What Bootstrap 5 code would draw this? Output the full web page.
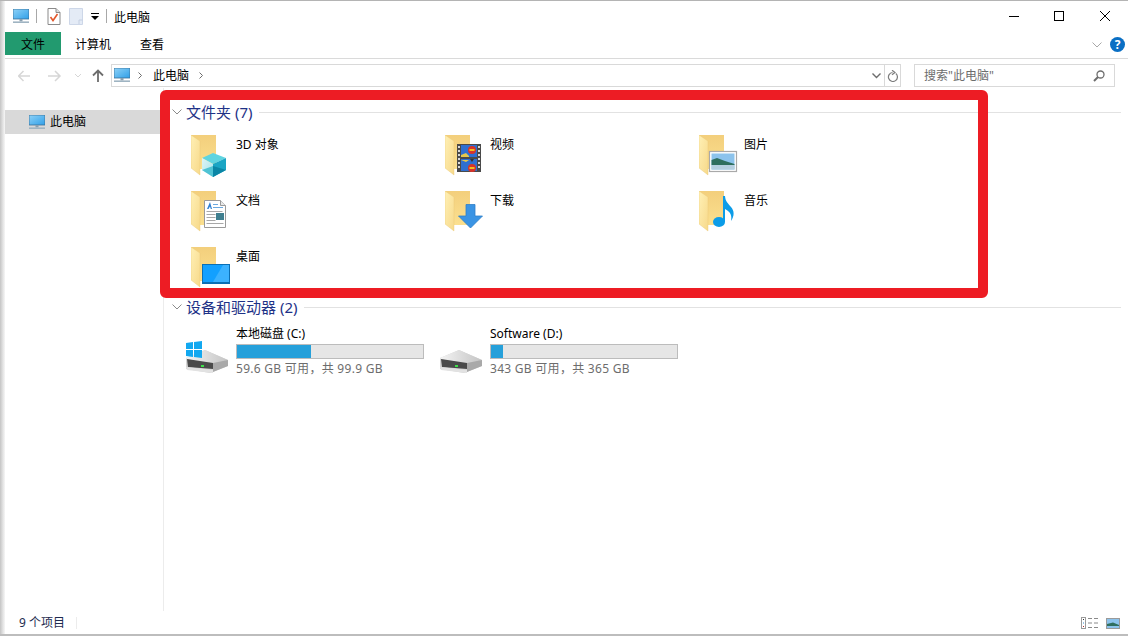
<!DOCTYPE html>
<html lang="zh-CN">
<head>
    <meta charset="UTF-8">
    <meta name="viewport" content="width=device-width, initial-scale=1.0">
    <title>此电脑</title>
    <link href="https://cdn.jsdelivr.net/npm/bootstrap@5.3.0/dist/css/bootstrap.min.css" rel="stylesheet">
    <style>
        html, body { height: 636px; overflow: hidden; }
        body {
            background: #fff;
            color: #000;
            font-family: "Noto Sans", "Noto Sans CJK SC", sans-serif;
            font-size: 12px;
            line-height: 16px;
        }
        .win {
            position: relative;
            width: 1128px;
            height: 636px;
            padding-left: 5px;
            border-top: 1px solid #b4b4b4;
            border-bottom: 2px solid #bdbdbd;
            background: linear-gradient(to right, #c4c4c4 0, #e4e4e4 3px, #f6f6f6 5px, #fff 5px);
        }
        .title-bar { height: 30px; padding-left: 8px; }
        .title-bar svg { flex: none; }
        .sep { width: 1px; height: 14px; background: #a8a8a8; flex: none; }
        .tb-pc { margin-right: 7px; }
        .tb-doc { margin-left: 10px; }
        .tb-gap8 { margin-left: 8px; }
        .tb-gap7 { margin-left: 7px; }
        .tb-name { margin-left: 7px; margin-top: 4px; }
        .win-btns { margin-left: auto; padding-right: 18px; gap: 35px; }
        .btn-close-x { margin-left: 1px; }
        .tab-bar { height: 28px; border-bottom: 1px solid #dadada; padding-right: 3px; }
        .file-tab { width: 56px; height: 23px; background: #229a6f; margin-top: 1px; padding-top: 2px; }
        .rib-tab { margin-top: 6px; }
        .rib-one { margin-left: 14px; }
        .rib-two { margin-left: 29px; }
        .rib-right { margin-top: 6px; }
        .nav-row { height: 29px; padding-left: 13px; padding-top: 5px; }
        .addr-box {
            width: 790px;
            height: 23px;
            border: 1px solid #d9d9d9;
            margin-left: 7px;
            padding-left: 2px;
        }
        .addr-name { margin-left: 11px; }
        .addr-chev { margin-left: 10px; }
        .addr-refresh { width: 16px; height: 21px; border-left: 1px solid #d9d9d9; margin-left: 3px; }
        .search-box {
            width: 201px;
            height: 23px;
            border: 1px solid #d9d9d9;
            margin-left: 13px;
            padding: 0 5px 0 9px;
            color: #6d6d6d;
        }
        .body-row { height: 523px; }
        .side-pane { width: 159px; flex: none; padding-top: 22px; border-right: 1px solid #ececec; }
        .side-item { width: 155px; height: 24px; background: #d9d9d9; padding-left: 24px; gap: 5px; }
        .main-pane { position: relative; flex: 1; padding: 14px 7px 0 8px; }
        .grp-head { height: 20px; color: #1e3287; font-size: 15px; gap: 4px; }
        .grp-line { flex: 1; height: 1px; background: #e2e2e2; margin-left: 3px; }
        .folder-grid {
            display: grid;
            grid-template-columns: repeat(3, 254px);
            grid-auto-rows: 56px;
            padding: 13px 0 0 19px;
            margin-bottom: -6px;
        }
        .folder-item svg { flex: none; }
        .folder-item span { margin-top: 2px; }
        .drive-row { padding: 9px 0 0 14px; }
        .drive-item { width: 254px; }
        .drive-item svg { flex: none; margin-top: 15px; }
        .drive-info { width: 188px; margin-left: 8px; }
        .drive-bar { height: 15px; background: #e6e6e6; border: 1px solid #bcbcbc; margin: 2px 0; }
        .drive-used { height: 100%; background: #26a0da; }
        .drive-sub { color: #6d6d6d; letter-spacing: .28px; }
        .status-bar { height: 24px; padding-left: 14px; padding-right: 8px; color: #1e2b4f; }
        .status-sep { width: 1px; height: 12px; background: #ececec; margin-left: 11px; }
        .red-box {
            position: absolute;
            left: 160px;
            top: 89px;
            width: 828px;
            height: 208px;
            border: 10px solid #ed1c24;
            border-radius: 6px;
        }
    </style>
</head>
<body>
    <svg width="0" height="0" class="position-absolute">
        <defs>
            <linearGradient id="gScreen" x1="0" y1="0" x2="1" y2="1">
                <stop offset="0" stop-color="#8fd2f7"/><stop offset="1" stop-color="#2f9fe8"/>
            </linearGradient>
            <linearGradient id="gBack" x1="0" y1="0" x2="0" y2="1">
                <stop offset="0" stop-color="#f3cf7c"/><stop offset="1" stop-color="#fbe08f"/>
            </linearGradient>
            <linearGradient id="gFold" x1="0" y1="0" x2="1" y2="1">
                <stop offset="0" stop-color="#fff0b5"/><stop offset="1" stop-color="#f7d98a"/>
            </linearGradient>
            <linearGradient id="gTop" x1="0" y1="0" x2="1" y2="0">
                <stop offset="0" stop-color="#f4f4f4"/><stop offset="1" stop-color="#c4c4c4"/>
            </linearGradient>
            <linearGradient id="gCubeL" x1="0" y1="0" x2="1" y2="1">
                <stop offset="0" stop-color="#dff5f7"/><stop offset="1" stop-color="#a5e2ea"/>
            </linearGradient>
            <symbol id="pc" viewBox="0 0 16 15">
                <rect x="0" y="0" width="16" height="10" fill="url(#gScreen)" stroke="#3a6f96" stroke-width=".8"/>
                <rect x="6.5" y="10" width="3" height="2.4" fill="#8aa0b0"/>
                <rect x="0" y="12.4" width="16" height="1.6" fill="#9fb4c2"/>
            </symbol>
            <symbol id="folder" viewBox="0 0 45 45">
                <path d="M0 0H25V34H8Z" fill="url(#gBack)"/>
                <path d="M0 0L9 6V40L0 33Z" fill="url(#gFold)" stroke="#e9c877" stroke-width=".4"/>
            </symbol>
            <symbol id="drive" viewBox="0 0 42 32">
                <path d="M0 17L19 9L42 19V25L24 32L0 28Z" fill="#d4d4d4"/>
                <path d="M0 17L19 9L42 19L27 24L1 18Z" fill="url(#gTop)"/>
                <path d="M1 18L27 22V28L2 26Z" fill="#4a4a4a"/>
                <path d="M27 22L42 19V25L27 31Z" fill="#a9a9a9"/>
                <path d="M0 26L27 29V32L1 29Z" fill="#e2e2e2"/>
                <rect x="15" y="24" width="3" height="2" fill="#3ee04a"/>
            </symbol>
        </defs>
    </svg>

    <div class="win">
        <div class="title-bar d-flex align-items-center">
            <svg width="16" height="15" class="tb-pc"><use href="#pc"/></svg>
            <span class="sep"></span>
            <svg width="14" height="17" class="tb-doc">
                <path d="M1 .5H9L13 4.500V16.500H1Z" fill="#fff" stroke="#8a8a8a"/>
                <path d="M9 .5V4.500H13" fill="#ddd" stroke="#8a8a8a"/>
                <path d="M3.500 9L6 12.500L10.500 6" fill="none" stroke="#e2572b" stroke-width="1.600"/>
            </svg>
            <svg width="14" height="17" class="tb-gap8">
                <path d="M.5 .5H13.500V16.500H.5Z" fill="#e4ebf6" stroke="#cdd7e8"/>
                <path d="M10 16V12H13.500" fill="none" stroke="#c4cfe2"/>
            </svg>
            <svg width="8" height="7" class="tb-gap8">
                <rect x="0" y="0" width="8" height="1" fill="#000"/>
                <path d="M0 3H8L4 7Z" fill="#000"/>
            </svg>
            <span class="sep tb-gap7"></span>
            <span class="tb-name">此电脑</span>
            <div class="win-btns d-flex align-items-center">
                <svg width="10" height="10"><rect x="0" y="5" width="10" height="1" fill="#000"/></svg>
                <svg width="10" height="10"><rect x=".5" y=".5" width="9" height="9" fill="none" stroke="#000"/></svg>
                <svg width="10" height="10" class="btn-close-x"><path d="M0 0L10 10M10 0L0 10" stroke="#000" stroke-width="1"/></svg>
            </div>
        </div>

        <div class="tab-bar d-flex align-items-start">
            <div class="file-tab d-flex align-items-center justify-content-center">文件</div>
            <div class="rib-tab rib-one">计算机</div>
            <div class="rib-tab rib-two">查看</div>
            <div class="rib-right d-flex align-items-center ms-auto gap-2">
                <svg width="10" height="6"><path d="M.5 .5L5 5L9.500 .5" fill="none" stroke="#a8a8a8"/></svg>
                <svg width="15" height="15">
                    <circle cx="7.500" cy="7.500" r="7.500" fill="#0a6fc4"/>
                    <text x="7.500" y="12" text-anchor="middle" font-size="12" font-weight="700" fill="#fff">?</text>
                </svg>
            </div>
        </div>

        <div class="nav-row d-flex align-items-start">
            <svg width="86" height="23">
                <path d="M.5 12H12M5.500 7L.5 12L5.500 17" fill="none" stroke="#d6d6d6" stroke-width="1.500"/>
                <path d="M30 12H42M37 7L42 12L37 17" fill="none" stroke="#d6d6d6" stroke-width="1.500"/>
                <path d="M57 10L60 13L63 10" fill="none" stroke="#d6d6d6"/>
                <path d="M80 18V7M75 11.500L80 6.500L85 11.500" fill="none" stroke="#6d6d6d" stroke-width="1.800"/>
            </svg>
            <div class="addr-box d-flex align-items-center">
                <svg width="16" height="15"><use href="#pc"/></svg>
                <svg width="4" height="7" class="ms-2"><path d="M.5 .5L3.500 3.500L.5 6.500" fill="none" stroke="#6d6d6d"/></svg>
                <span class="addr-name">此电脑</span>
                <svg width="4" height="7" class="addr-chev"><path d="M.5 .5L3.500 3.500L.5 6.500" fill="none" stroke="#6d6d6d"/></svg>
                <svg width="9" height="6" class="ms-auto"><path d="M.5 .5L4.500 4.500L8.500 .5" fill="none" stroke="#6d6d6d" stroke-width="1.400"/></svg>
                <div class="addr-refresh d-flex align-items-center justify-content-center">
                    <svg width="11" height="12"><path d="M8.800 3.500A4.500 4.500 0 1 1 5.500 2.500M5 .2L8 2.500L5 4.800" fill="none" stroke="#7d7d7d" stroke-width="1.200"/></svg>
                </div>
            </div>
            <div class="search-box d-flex align-items-center">
                <span>搜索"此电脑"</span>
                <svg width="12" height="12" class="ms-auto me-1"><circle cx="7.500" cy="4.500" r="3.500" fill="none" stroke="#6d6d6d" stroke-width="1.300"/><path d="M5 7L1 11" stroke="#6d6d6d" stroke-width="2"/></svg>
            </div>
        </div>

        <div class="body-row d-flex">
            <div class="side-pane">
                <div class="side-item d-flex align-items-center">
                    <svg width="16" height="15"><use href="#pc"/></svg>
                    <span>此电脑</span>
                </div>
            </div>
            <div class="main-pane">
                <div class="grp-head d-flex align-items-center">
                    <svg width="10" height="6"><path d="M.5 .5L5 5L9.500 .5" fill="none" stroke="#8a8a8a"/></svg>
                    <span>文件夹 (7)</span>
                    <span class="grp-line"></span>
                </div>
                <div class="folder-grid">
                    <div class="folder-item d-flex">
                        <svg width="45" height="45">
                            <use href="#folder"/>
                            <path d="M22 18L35 23L22 29L11 23Z" fill="#5fd4e0"/>
                            <path d="M11 23L22 29V42L11 35Z" fill="url(#gCubeL)"/>
                            <path d="M22 29L35 23V35L22 42Z" fill="#1aa5c4"/>
                            <path d="M11 35L22 31V42Z" fill="#4fc3d4"/>
                            <path d="M35 35L22 31V42Z" fill="#0a86a6"/>
                        </svg>
                        <span>3D 对象</span>
                    </div>
                    <div class="folder-item d-flex">
                        <svg width="45" height="45">
                            <use href="#folder"/>
                            <rect x="12" y="9" width="24" height="28" fill="#4a4a4a"/>
                            <path d="M13 11h2v2h-2zM13 15h2v2h-2zM13 19h2v2h-2zM13 23h2v2h-2zM13 27h2v2h-2zM13 31h2v2h-2zM33 11h2v2h-2zM33 15h2v2h-2zM33 19h2v2h-2zM33 23h2v2h-2zM33 27h2v2h-2zM33 31h2v2h-2z" fill="#d8d8d8"/>
                            <rect x="16" y="10" width="16" height="12" fill="#2f6fd0"/>
                            <rect x="16" y="24" width="16" height="12" fill="#2f6fd0"/>
                            <circle cx="27" cy="15" r="4" fill="#d8342a"/>
                            <rect x="24.500" y="14" width="5" height="2" fill="#f0c020"/>
                            <path d="M16 20L21 18L24 21V22H16Z" fill="#e6c84c"/>
                            <circle cx="27" cy="33" r="4" fill="#d8342a"/>
                            <rect x="24.500" y="32" width="5" height="2" fill="#f0c020"/>
                            <path d="M16 25H24L21 27Z" fill="#e6c84c"/>
                            <path d="M25 24H29L27 27Z" fill="#333"/>
                        </svg>
                        <span>视频</span>
                    </div>
                    <div class="folder-item d-flex">
                        <svg width="45" height="45">
                            <use href="#folder"/>
                            <rect x="10.500" y="16.500" width="27" height="20" fill="#fff" stroke="#a9a9a9" stroke-width="1.200"/>
                            <rect x="12.500" y="18.500" width="23" height="16" fill="#8cc3ec"/>
                            <path d="M12.500 25L18 23L26 26L35.500 29V30H12.500Z" fill="#2f6f5f"/>
                            <rect x="12.500" y="30" width="23" height="4.500" fill="#b5cfe0"/>
                        </svg>
                        <span>图片</span>
                    </div>
                    <div class="folder-item d-flex">
                        <svg width="45" height="45">
                            <use href="#folder"/>
                            <path d="M13.500 9.500H29.500L34.500 14.500V36.500H13.500Z" fill="#fff" stroke="#9a9a9a"/>
                            <path d="M29.500 9.500V14.500H34.500" fill="#e8e8e8" stroke="#9a9a9a"/>
                            <path d="M16 18L19 11L21 18H19.800L19 15.500L17.500 18Z" fill="#2f7fd0"/>
                            <rect x="22" y="13" width="5" height="1" fill="#6aa8e0"/>
                            <rect x="22" y="16" width="10" height="1" fill="#6aa8e0"/>
                            <path d="M15.500 20h16v1h-16zM15.500 23h9v1h-9zM15.500 26h9v1h-9zM15.500 29h9v1h-9zM15.500 32h17v1h-17z" fill="#a8a8a8"/>
                            <rect x="25" y="22" width="8" height="7" fill="#3f7f8f"/>
                        </svg>
                        <span>文档</span>
                    </div>
                    <div class="folder-item d-flex">
                        <svg width="45" height="45">
                            <use href="#folder"/>
                            <path d="M21 13.500H30V25H37.500L25.500 37L13.500 25H21Z" fill="#3a94e4" stroke="#2f7fc8" stroke-width=".8"/>
                        </svg>
                        <span>下载</span>
                    </div>
                    <div class="folder-item d-flex">
                        <svg width="45" height="45">
                            <use href="#folder"/>
                            <ellipse cx="20" cy="31" rx="6" ry="5" fill="#0c9ce8"/>
                            <path d="M24 5H26C26.500 11 29 12 32 16C35.500 20 35.500 25 32 30C33 25 32 21 26 18V31H24Z" fill="#0c9ce8"/>
                        </svg>
                        <span>音乐</span>
                    </div>
                    <div class="folder-item d-flex">
                        <svg width="45" height="45">
                            <use href="#folder"/>
                            <rect x="11.500" y="17.500" width="27" height="19" fill="#12a0ff" stroke="#0b6fb5"/>
                            <path d="M22 35L32 18H38V35Z" fill="#3cb2ff"/>
                            <rect x="12" y="35" width="26" height="1.500" fill="#0b6fb5"/>
                        </svg>
                        <span>桌面</span>
                    </div>
                </div>
                <div class="grp-head d-flex align-items-center">
                    <svg width="10" height="6"><path d="M.5 .5L5 5L9.500 .5" fill="none" stroke="#8a8a8a"/></svg>
                    <span>设备和驱动器 (2)</span>
                    <span class="grp-line"></span>
                </div>
                <div class="drive-row d-flex">
                    <div class="drive-item d-flex">
                        <svg width="42" height="32">
                            <use href="#drive"/>
                            <path d="M0 2L7 1V8H0ZM8 1L16 0V8H8ZM0 9H7V16L0 15ZM8 9H16V17L8 16Z" fill="#12a8f0"/>
                        </svg>
                        <div class="drive-info">
                            <div>本地磁盘 (C:)</div>
                            <div class="drive-bar"><div class="drive-used" style="width:40%"></div></div>
                            <div class="drive-sub">59.6 GB 可用，共 99.9 GB</div>
                        </div>
                    </div>
                    <div class="drive-item d-flex">
                        <svg width="42" height="32"><use href="#drive"/></svg>
                        <div class="drive-info">
                            <div>Software (D:)</div>
                            <div class="drive-bar"><div class="drive-used" style="width:6.500%"></div></div>
                            <div class="drive-sub">343 GB 可用，共 365 GB</div>
                        </div>
                    </div>
                </div>
            </div>
        </div>

        <div class="status-bar d-flex align-items-center">
            <span>9 个项目</span>
            <span class="status-sep"></span>
            <svg width="17" height="12" class="ms-auto me-2">
                <rect x=".5" y=".5" width="4" height="11" fill="#fff" stroke="#9a9a9a"/>
                <rect x="2" y="2" width="1" height="1" fill="#333"/>
                <rect x="2" y="5.500" width="1" height="1" fill="#3a8fd0"/>
                <rect x="2" y="9" width="1" height="1" fill="#b03030"/>
                <path d="M7 1.500h4M13 1.500h4M7 6h4M13 6h4M7 10.500h4M13 10.500h4" stroke="#8a8a8a"/>
            </svg>
            <svg width="14" height="11">
                <rect x=".5" y=".5" width="13" height="10" fill="#8cc3ec" stroke="#9a9a9a"/>
                <path d="M1 6L7 4.500L13 7V8H1Z" fill="#2f6f5f"/>
            </svg>
        </div>

        <div class="red-box"></div>
    </div>

    <script src="https://cdn.jsdelivr.net/npm/bootstrap@5.3.0/dist/js/bootstrap.bundle.min.js"></script>
</body>
</html>
